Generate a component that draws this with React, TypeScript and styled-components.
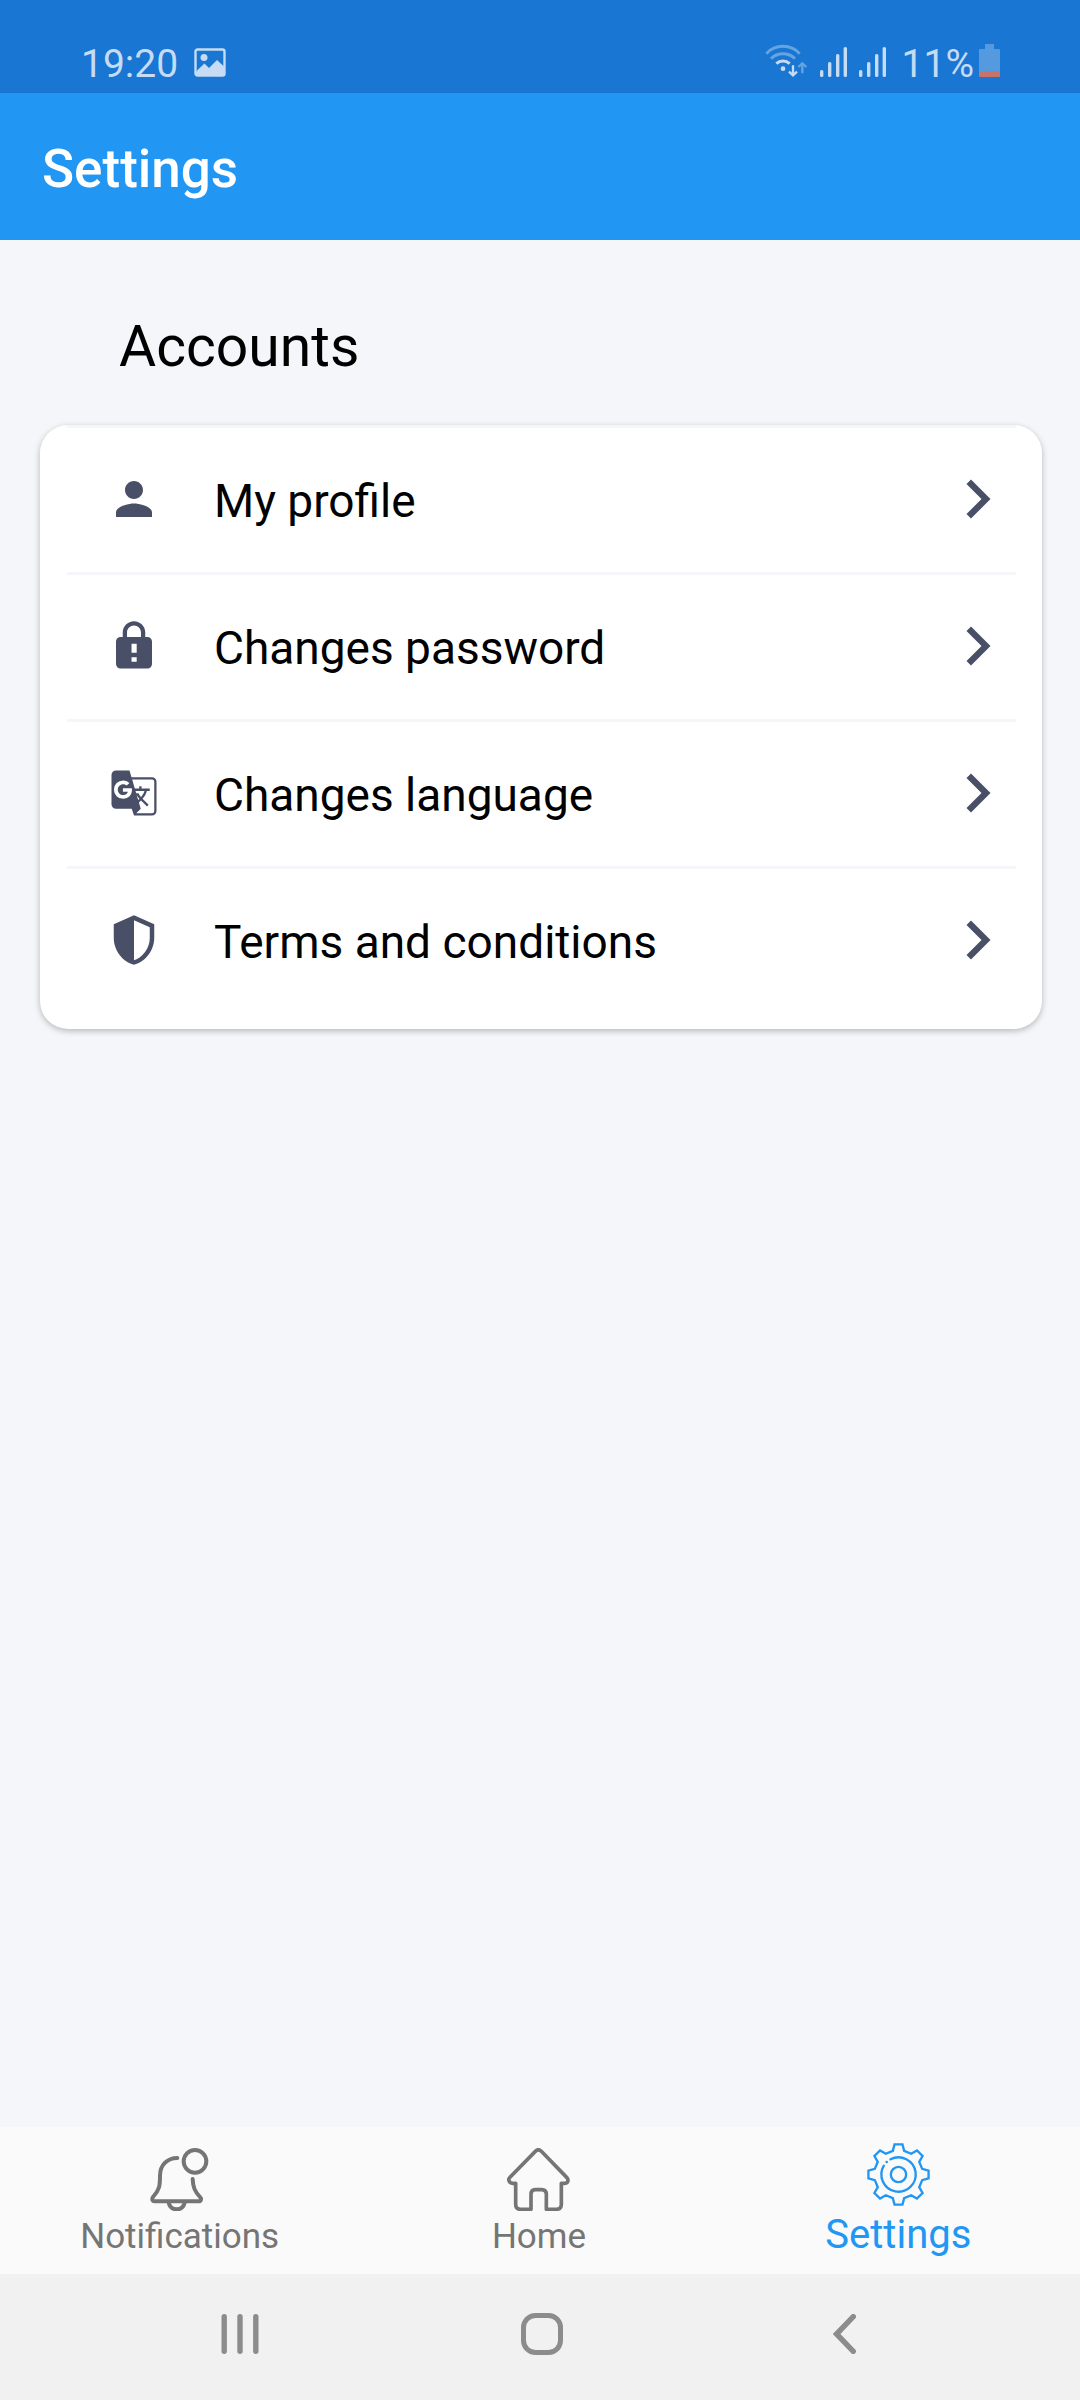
import React from 'react';
import styled, { createGlobalStyle } from 'styled-components';

const GlobalStyle = createGlobalStyle`
  * {
    box-sizing: border-box;
  }
  body {
    margin: 0;
    background: #f4f6fa;
    font-family: Roboto, 'Liberation Sans', sans-serif;
  }
  svg {
    display: block;
    flex: none;
  }
`;

const Screen = styled.div`
  display: flex;
  flex-direction: column;
  min-height: 100vh;
`;

const StatusBar = styled.div`
  display: flex;
  justify-content: space-between;
  align-items: flex-end;
  height: 93px;
  padding: 0 80px 16px 81px;
  background: #1976d2;
  color: #c6dbf4;
  font-size: 39px;
  line-height: 26px;
`;

const StatusGroup = styled.div<{ $gap: number }>`
  display: flex;
  align-items: flex-end;
  gap: ${(p) => p.$gap}px;
`;

const BatteryGroup = styled(StatusGroup)`
  padding-left: 4px;
`;

const AppBar = styled.header`
  display: flex;
  align-items: center;
  height: 147px;
  padding: 4px 42px 0;
  background: #2196f3;
`;

const AppTitle = styled.h1`
  margin: 0;
  color: #fff;
  font-size: 53px;
  font-weight: 500;
  line-height: 64px;
`;

const Content = styled.main`
  flex: 1;
  padding: 71px 38px 40px 40px;
`;

const SectionTitle = styled.h2`
  margin: 0 0 42px;
  padding-left: 79px;
  color: #000;
  font-size: 57px;
  font-weight: 400;
  line-height: 72px;
`;

const Card = styled.ul`
  margin: 0;
  padding: 0 26px 16px 27px;
  list-style: none;
  background: #fff;
  border-radius: 28px;
  box-shadow: 0 2px 6px rgba(0, 0, 0, 0.26);
`;

const Row = styled.button`
  display: flex;
  align-items: center;
  width: 100%;
  height: 147px;
  padding: 0 0 0 40px;
  border: 0;
  background: none;
  box-shadow: inset 0 3px #f4f6fa;
  color: #494f66;
  font-family: inherit;
  text-align: left;
`;

const RowLabel = styled.span`
  flex: 1;
  padding: 5px 0 0 53px;
  color: #000;
  font-size: 46px;
  line-height: 56px;
`;

const TabBar = styled.nav`
  display: grid;
  grid-template-columns: repeat(3, 1fr);
  height: 147px;
  padding-right: 2px;
  background: #fafafa;
`;

const Tab = styled.button<{ $active?: boolean }>`
  display: flex;
  flex-direction: column;
  align-items: center;
  justify-content: flex-end;
  gap: 5px;
  padding: 0 0 ${(p) => (p.$active ? 15 : 16)}px;
  border: 0;
  background: none;
  color: ${(p) => (p.$active ? '#2196f3' : '#757575')};
  font-family: inherit;
  font-size: ${(p) => (p.$active ? 40 : 35)}px;
  line-height: ${(p) => (p.$active ? 48 : 42)}px;
`;

const SystemBar = styled.nav`
  display: grid;
  grid-template-columns: repeat(3, 1fr);
  height: 126px;
  padding: 0 85px 6px 89px;
  background: #f1f1f1;
`;

const SystemButton = styled.button`
  display: flex;
  align-items: center;
  justify-content: center;
  padding: 0;
  border: 0;
  background: none;
  color: #8c8c8c;
`;

const Glyph = ({ d }: { d: string }) => (
  <svg width="54" height="54" viewBox="0 0 24 24" fill="currentColor" fillRule="evenodd" aria-hidden="true">
    <path d={d} />
  </svg>
);

const person =
  'M12 12c2.21 0 4-1.79 4-4s-1.79-4-4-4-4 1.79-4 4 1.79 4 4 4zm0 2c-2.67 0-8 1.34-8 4v2h16v-2c0-2.66-5.33-4-8-4z';
const lock =
  'M18 8h-1V6c0-2.76-2.24-5-5-5S7 3.24 7 6v2H6c-1.1 0-2 .9-2 2v10c0 1.1.9 2 2 2h12c1.1 0 2-.9 2-2V10c0-1.1-.9-2-2-2zM8.9 6c0-1.71 1.39-3.1 3.1-3.1s3.1 1.39 3.1 3.1v2H8.9V6zM10.9 11h2.3v4h-2.3zM10.9 17h2.3v2h-2.3z';
const translate =
  'M20,5H10.88L10,2H4A2,2 0 0,0 2,4V17A2,2 0 0,0 4,19H11L12,22H20A2,2 0 0,0 22,20V7A2,2 0 0,0 20,5M7.17,14.59A4.09,4.09 0 0,1 3.08,10.5A4.09,4.09 0 0,1 7.17,6.41C8.21,6.41 9.16,6.78 9.91,7.5L10,7.54L8.75,8.72L8.69,8.67C8.4,8.4 7.91,8.08 7.17,8.08C5.86,8.08 4.79,9.17 4.79,10.5C4.79,11.83 5.86,12.92 7.17,12.92C8.54,12.92 9.13,12.05 9.29,11.46H7.08V9.91H11.03L11.04,9.97C11.08,10.18 11.09,10.38 11.09,10.59C11.09,12.94 9.5,14.59 7.17,14.59M13.2,12.88C13.53,13.5 13.94,14.06 14.39,14.58L13.85,15.11L13.2,12.88M13.97,12.12H13L12.67,11.08H16.66C16.66,11.08 16.32,12.39 15.1,13.82C14.58,13.2 14.21,12.59 13.97,12.12M21,20A1,1 0 0,1 20,21H13L15,19L14.19,16.23L15.11,15.31L17.79,18L18.5,17.27L15.81,14.59C16.71,13.56 17.41,12.34 17.73,11.08H19V10.04H15.36V9H14.32V10.04H12.36L11.18,6H20A1,1 0 0,1 21,7V20Z';
const shield =
  'M21,11C21,16.55 17.16,21.74 12,23C6.84,21.74 3,16.55 3,11V5L12,1L21,5V11M12,21C15.75,20 19,15.54 19,11.22V6.3L12,3.18V21Z';

const ChevronIcon = () => (
  <svg width="78" height="78" viewBox="0 0 78 78" fill="currentColor" aria-hidden="true">
    <path d="M28.500 54L43.500 39L28.500 24L33 19.500L52.500 39L33 58.500Z" />
  </svg>
);

const PictureIcon = () => (
  <svg width="32" height="29" viewBox="0 0 32 29" aria-hidden="true">
    <rect x="1.500" y="1.500" width="29" height="26" rx="2" fill="none" stroke="currentColor" strokeWidth="2.400" />
    <circle cx="10" cy="9.500" r="3.500" fill="currentColor" />
    <path d="M2 24L4 21.500L10.500 15.500L15 20L23 12L30 18.500V27H2Z" fill="currentColor" />
  </svg>
);

const WifiIcon = () => (
  <svg width="43" height="35" viewBox="52 38 129 105" fill="none" stroke="currentColor" strokeWidth="9" aria-hidden="true">
    <path d="M56 73A68 68 0 0 1 156 73M70 88A51 51 0 0 1 142 88" opacity="0.45" />
    <path d="M86 103A29 29 0 0 1 126 103" />
    <circle cx="106" cy="118" r="7" fill="currentColor" stroke="none" />
    <path d="M136 108V138M124 127L136 138L148 127" strokeWidth="7" />
    <path d="M164 132V102M152 113L164 102L176 113" strokeWidth="7" opacity="0.45" />
  </svg>
);

const SignalIcon = () => (
  <svg width="27" height="31" viewBox="0 0 27 31" fill="currentColor" aria-hidden="true">
    <rect x="0" y="24" width="3.400" height="7" rx="1.500" />
    <rect x="8" y="16" width="3.400" height="15" rx="1.500" />
    <rect x="16" y="8" width="3.400" height="23" rx="1.500" />
    <rect x="23.600" y="1" width="3.400" height="30" rx="1.500" />
  </svg>
);

const BatteryIcon = () => (
  <svg width="21" height="33" viewBox="0 0 21 33" aria-hidden="true">
    <path d="M6 0H15V5H20Q21 5 21 6V27H0V6Q0 5 1 5H6Z" fill="#5599df" />
    <path d="M0 27H21V32Q21 33 20 33H1Q0 33 0 32Z" fill="#c6736b" />
  </svg>
);

const BellIcon = () => (
  <svg width="63" height="63" viewBox="265 113 189 189" fill="none" stroke="currentColor" strokeWidth="12" strokeLinecap="round" aria-hidden="true">
    <circle cx="406" cy="153" r="34" />
    <path d="M353 143C322 143 301 165 301 196C301 225 300 238 280 260C275 267 278 273 285 273H417C425 273 426 265 421 260C405 243 400 230 399 206" />
    <path d="M327 277C330 291 340 297 351 297S372 291 375 277" />
  </svg>
);

const HomeIcon = () => (
  <svg width="63" height="63" viewBox="114 113 189 189" fill="none" stroke="currentColor" strokeWidth="11" strokeLinejoin="round" aria-hidden="true">
    <path d="M186 297V253Q186 238 199 238H218Q232 238 232 253V297H262Q277 297 277 282V219H287Q297 219 297 209Q297 205 293 201L217 123Q208 114 199 123L123 201Q117 207 121 213Q124 219 131 219H140V282Q140 297 155 297Z" />
  </svg>
);

// Eight teeth, each given by its two base corners and its two tip corners.
const gearOutline = Array.from({ length: 8 }, (_, tooth) =>
  [
    [-13.5, 73],
    [-7.5, 91],
    [7.5, 91],
    [13.5, 73],
  ].map(([offset, radius]) => {
    const angle = ((tooth * 45 + offset) * Math.PI) / 180;
    return `${(94.5 + radius * Math.sin(angle)).toFixed(1)},${(94.5 - radius * Math.cos(angle)).toFixed(1)}`;
  }),
)
  .flat()
  .join(' ');

const GearIcon = () => (
  <svg width="63" height="63" viewBox="0 0 189 189" fill="none" stroke="currentColor" strokeWidth="7" aria-hidden="true">
    <polygon points={gearOutline} />
    <circle cx="94.500" cy="94.500" r="23" />
    <path d="M70.500 49A51.500 51.500 0 1 1 50.500 68" strokeLinecap="round" />
    <circle cx="59" cy="57" r="4" fill="currentColor" stroke="none" />
  </svg>
);

const RecentsIcon = () => (
  <svg width="38" height="40" viewBox="0 0 38 40" fill="currentColor" aria-hidden="true">
    <rect x="0.500" width="5.400" height="40" rx="2.700" />
    <rect x="16.300" width="5.400" height="40" rx="2.700" />
    <rect x="32.100" width="5.400" height="40" rx="2.700" />
  </svg>
);

const OverviewIcon = () => (
  <svg width="42" height="42" viewBox="0 0 42 42" aria-hidden="true">
    <rect x="2.500" y="2.500" width="37" height="37" rx="12" fill="none" stroke="currentColor" strokeWidth="5" />
  </svg>
);

const BackIcon = () => (
  <svg width="23" height="40" viewBox="0 0 23 40" fill="none" stroke="currentColor" strokeWidth="5.400" strokeLinecap="round" aria-hidden="true">
    <path d="M20.300 2.700L3.600 20L20.300 37.300" />
  </svg>
);

const rows = [
  { label: 'My profile', icon: person },
  { label: 'Changes password', icon: lock },
  { label: 'Changes language', icon: translate },
  { label: 'Terms and conditions', icon: shield },
];

export default function App() {
  return (
    <Screen>
      <GlobalStyle />
      <StatusBar>
        <StatusGroup $gap={16}>
          <span>19:20</span>
          <PictureIcon />
        </StatusGroup>
        <StatusGroup $gap={12}>
          <WifiIcon />
          <SignalIcon />
          <SignalIcon />
          <BatteryGroup $gap={5}>
            <span>11%</span>
            <BatteryIcon />
          </BatteryGroup>
        </StatusGroup>
      </StatusBar>
      <AppBar>
        <AppTitle>Settings</AppTitle>
      </AppBar>
      <Content>
        <SectionTitle>Accounts</SectionTitle>
        <Card>
          {rows.map((row) => (
            <li key={row.label}>
              <Row type="button">
                <Glyph d={row.icon} />
                <RowLabel>{row.label}</RowLabel>
                <ChevronIcon />
              </Row>
            </li>
          ))}
        </Card>
      </Content>
      <TabBar aria-label="Sections">
        <Tab type="button">
          <BellIcon />
          Notifications
        </Tab>
        <Tab type="button">
          <HomeIcon />
          Home
        </Tab>
        <Tab type="button" $active aria-current="page">
          <GearIcon />
          Settings
        </Tab>
      </TabBar>
      <SystemBar aria-label="System">
        <SystemButton type="button" aria-label="Recent apps">
          <RecentsIcon />
        </SystemButton>
        <SystemButton type="button" aria-label="Home screen">
          <OverviewIcon />
        </SystemButton>
        <SystemButton type="button" aria-label="Back">
          <BackIcon />
        </SystemButton>
      </SystemBar>
    </Screen>
  );
}
